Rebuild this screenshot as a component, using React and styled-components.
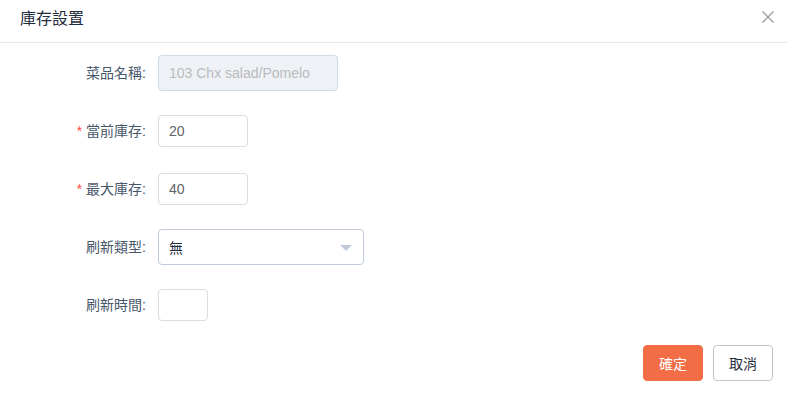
import React from 'react';
import styled, { createGlobalStyle } from 'styled-components';

const GlobalStyle = createGlobalStyle`
  html, body {
    margin: 0;
    padding: 0;
    background: #fff;
  }
  body {
    font-family: "Liberation Sans", "Noto Sans CJK TC", sans-serif;
    -webkit-font-smoothing: antialiased;
  }
`

const Dialog = styled.div`
  width: 787px;
  height: 402px;
  background: #fff;
  box-sizing: border-box;
`

const Header = styled.div`
  height: 43px;
  border-bottom: 1px solid #e6e6e6;
  display: flex;
  align-items: center;
  justify-content: space-between;
  padding: 0 12px 0 20px;
  box-sizing: border-box;
`

const Title = styled.span`
  font-size: 16px;
  color: #1f2d3d;
  margin-top: -8px;
`

const Close = styled.button`
  border: none;
  background: none;
  padding: 0;
  width: 14px;
  height: 14px;
  margin-top: -9px;
  cursor: pointer;
  display: flex;
`

const Form = styled.div`
  padding: 12px 20px 0;
`

const Item = styled.div`
  display: flex;
  align-items: center;
  min-height: 36px;
  margin-bottom: 22px;
`

const Label = styled.label`
  width: 138px;
  padding-right: 12px;
  box-sizing: border-box;
  text-align: right;
  font-size: 14px;
  color: #48576a;
  line-height: 1;
  &::before {
    content: ${p => (p.required ? '"*"' : 'none')};
    color: #ff4949;
    margin-right: 4px;
  }
`

const Input = styled.div`
  width: ${p => p.width}px;
  height: ${p => p.height || 32}px;
  border: 1px solid ${p => (p.disabled ? '#d1dbe5' : '#dcdcdc')};
  background: ${p => (p.disabled ? '#eef1f6' : '#fff')};
  color: ${p => (p.disabled ? '#bbb' : '#606266')};
  border-radius: 4px;
  box-sizing: border-box;
  padding: 0 10px;
  display: flex;
  align-items: center;
  font-size: 14px;
`

const Select = styled(Input)`
  border-color: #bfcbd9;
  color: #1f2d3d;
  justify-content: space-between;
  padding-right: 11px;
`

const Caret = styled.span`
  width: 0;
  height: 0;
  border-left: 6px solid transparent;
  border-right: 6px solid transparent;
  border-top: 6px solid #bfcbd9;
  margin-top: 2px;
`

const Footer = styled.div`
  display: flex;
  justify-content: flex-end;
  gap: 10px;
  padding: 0 14px 0 0;
  margin-top: 2px;
`

const Button = styled.button`
  width: 60px;
  height: 36px;
  border-radius: 4px;
  font-size: 14px;
  font-family: inherit;
  box-sizing: border-box;
  cursor: pointer;
  border: 1px solid ${p => (p.primary ? '#f26d45' : '#c4c4c4')};
  background: ${p => (p.primary ? '#f26d45' : '#fff')};
  color: ${p => (p.primary ? '#fff' : '#1f2d3d')};
`

const App = () => {
  return (
    <Dialog>
      <GlobalStyle />
      <Header>
        <Title>庫存設置</Title>
        <Close aria-label="close">
          <svg width="14" height="14" viewBox="0 0 14 14">
            <path d="M1.5 1.5 L12.5 12.5 M12.5 1.5 L1.5 12.5" stroke="#9a9a9a" strokeWidth="1.3" fill="none" />
          </svg>
        </Close>
      </Header>
      <Form>
        <Item>
          <Label>菜品名稱:</Label>
          <Input width={180} height={36} disabled>103 Chx salad/Pomelo</Input>
        </Item>
        <Item>
          <Label required>當前庫存:</Label>
          <Input width={90}>20</Input>
        </Item>
        <Item>
          <Label required>最大庫存:</Label>
          <Input width={90}>40</Input>
        </Item>
        <Item>
          <Label>刷新類型:</Label>
          <Select width={206} height={36}>
            <span>無</span>
            <Caret />
          </Select>
        </Item>
        <Item>
          <Label>刷新時間:</Label>
          <Input width={50} />
        </Item>
      </Form>
      <Footer>
        <Button primary>確定</Button>
        <Button>取消</Button>
      </Footer>
    </Dialog>
  )
}

export default App;
